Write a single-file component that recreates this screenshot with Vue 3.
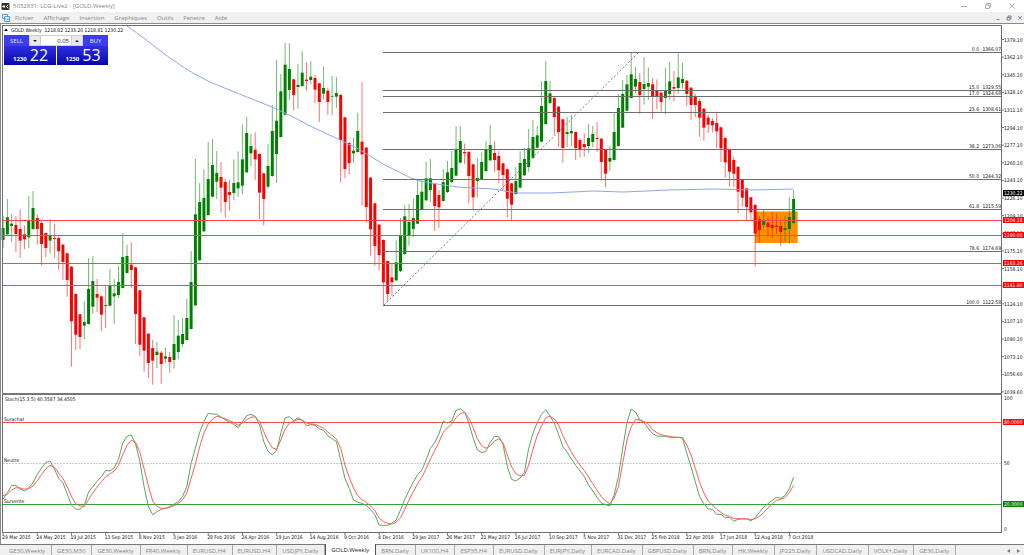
<script setup>
import { ref } from 'vue'

const menus = ['Fichier', 'Affichage', 'Insertion', 'Graphiques', 'Outils', 'Fenetre', 'Aide']
const tabs = [
  'GE30,Weekly', 'GE30,M30', 'GE30,Weekly', 'FR40,Weekly', 'EURUSD,H4', 'EURUSD,H4', 'USDJPY,Daily',
  'GOLD,Weekly', 'BRN,Daily', 'UK100,H4', 'ESP35,H4', 'EURUSD,Daily', 'EURJPY,Daily', 'EURCAD,Daily',
  'GBPUSD,Daily', 'BRN,Daily', 'HK,Weekly', 'JP225,Daily', 'USDCAD,Daily', 'VOLX+,Daily', 'GE30,Daily'
]
const activeTab = ref(7)
const volume = ref('0.05')

const STEP = 4.273
const barX = (i) => 3.1 + STEP * i

// Candles: direction, high, body top, body bottom, low, in thirds of a unit below each block's top.
const blocks = [
  {
    top: 180,
    rows: `g 108 144 180 204|g 57 112 163 165|g 103 131 138 186|r 108 135 162 216|r 88 147 182 234|r 136 163 178 207
|g 48 120 172 204|g 33 84 147 149|r 103 114 147 194|r 123 129 192 256|r 158 159 204 231|g 117 165 182 221
|r 131 174 177 234|r 170 174 214 269|r 192 194 246 300|r 218 220 300 350|r 258 260 424 560|r 340 342 464 510
|r 402 403 471 507|g 363 426 437 479|g 234 327 432 434|g 228 303 380 401|r 297 342 353 396|r 347 349 404 453
|r 316 375 378 444|g 267 318 377 380|g 297 340 349 432|g 258 306 345 354|g 159 231 324 326|g 194 228 279 280
|r 187 254 270 325|r 261 262 402 492|r 330 331 494 528|r 411 412 512 575|r 459 461 549 594|r 480 504 542 614
|g 486 515 525 564|r 513 518 552 611|g 502 529 536 549|r 516 531 546 578|g 405 492 540 566|g 420 467 516 537
|g 414 462 492 501|g 357 414 480 481|g 213 306 447 448`
  },
  {
    top: 30,
    rows: `g 387 553 826 828|g 459 516 691 693|g 418 504 604 606|g 336 447 555 557|g 327 405 500 502|g 363 429 455 507
|r 396 441 473 548|r 447 456 516 563|r 450 486 495 542|g 388 459 489 510|g 364 457 475 500|g 283 388 467 493
|g 261 309 427 429|g 312 348 370 408|r 307 359 388 450|r 370 372 488 567|r 429 430 507 586|g 341 408 470 476
|g 225 303 438 440|g 90 272 372 459|g 132 184 321 323|g 39 104 254 256|g 40 117 180 210|r 147 148 195 242
|g 102 165 171 236|g 64 128 168 170|r 96 149 153 182|g 93 140 150 163|r 135 144 179 219|r 159 160 216 276
|g 110 174 191 208|r 173 182 216 255|g 138 198 200 256|g 141 189 200 234|r 192 195 330 458|r 261 262 417 444
|r 336 339 399 434|g 323 362 370 398|g 248 303 366 368|r 156 335 373 526|r 351 353 531 578`
  },
  {
    top: 110,
    rows: `r 201 203 358 437|r 278 280 408 467|r 342 344 435 482|r 388 390 517 585|r 452 453 552 576|r 459 502 517 558
|g 391 457 511 514|g 324 378 483 486|g 285 319 432 434|g 282 336 376 407|g 266 324 357 382|g 207 255 341 343
|g 207 245 297 299|g 156 205 271 273|g 147 205 240 276|r 220 222 288 363|r 240 255 292 354|g 177 216 273 275
|g 153 187 246 249|g 123 174 216 219|g 49 120 197 200|g 48 93 158 160|r 101 126 130 162|r 123 126 198 280
|r 162 163 262 301|g 144 204 213 262|g 127 156 208 210|g 93 120 183 186|g 45 105 151 153|r 93 129 150 186
|r 123 138 181 219|r 158 160 195 240|r 175 178 266 322|r 219 220 284 332|g 172 213 252 255|g 124 159 233 235
|g 114 147 196 198|g 57 115 171 186`
  },
  {
    top: 40,
    rows: `g 240 291 354 357|g 258 286 323 325|g 123 198 305 307|g 63 123 252 254|g 122 160 189 193|r 171 174 231 283
|r 198 200 276 321|r 236 238 324 368|g 231 276 282 321|g 224 273 280 318|r 275 276 324 360|r 294 300 327 352
|r 280 312 322 350|g 252 294 318 339|g 258 282 306 321|r 246 294 297 336|r 294 296 366 422|r 329 330 401 442
|g 318 354 365 393|g 219 276 360 362|g 162 204 318 320|g 120 162 263 264|g 105 133 212 214|g 39 103 174 176
|g 81 117 140 159|r 99 126 165 222|g 51 132 147 194|g 82 129 140 180|r 114 133 171 237|r 118 152 168 207
|r 150 158 186 215|g 84 150 174 222|g 66 124 162 180|r 93 141 146 184|g 40 112 144 162|g 69 117 129 146`
  },
  {
    top: 70,
    rows: `r 30 32 72 108|r 51 53 105 149|r 72 78 105 141|r 86 93 143 201|r 114 116 173 212|r 133 143 164 189
|r 144 153 166 187|r 125 159 184 234|r 170 172 235 276|r 201 204 277 323|r 237 238 305 350|r 260 270 311 352
|r 288 291 365 430|r 327 328 383 411|r 354 355 411 453|r 381 382 427 450|r 402 405 491 590|r 438 447 480 519
|g 420 453 465 477|r 442 458 471 500|r 426 465 474 504|r 431 467 471 492|r 452 468 486 528|g 438 474 480 515
|g 382 441 477 521|g 360 387 459 461`
  }
]

const candles = blocks
  .flatMap(({ top, rows }) =>
    rows.split('|').map((row) => {
      const [dir, ...v] = row.trim().split(' ')
      const [high, a, b, low] = v.map((n) => top + Number(n) / 3)
      return { dir, high, a, b, low }
    })
  )
  .map((c, i) => ({ ...c, x: barX(i) }))

const path = (values) =>
  values
    .trim()
    .split(/\s+/)
    .map((v, i) => `${barX(i).toFixed(1)},${(390 + v / 3).toFixed(1)}`)
    .join(' ')

const stochK = path(`
327 308 286 286 297 303 293 279 253 234 217 213 237 265 278 312 346 357 358 346 306 290 274 260 241 243 234 208 160 139
135 162 214 290 350 374 365 358 355 350 342 335 319 290 220 175 127 95 70 72 73 81 90 97 103 113 95 77 73 79
105 155 184 194 182 130 84 80 92 83 91 107 104 106 116 121 137 146 155 210 265 295 330 337 340 346 359 374 405 406
406 400 390 360 328 302 276 254 240 210 175 158 132 94 99 93 61 56 66 100 143 180 188 184 157 139 140 163 230 268
273 264 247 175 130 98 73 59 78 100 133 170 187 207 226 243 259 285 303 322 339 344 348 315 260 175 98 57 66 90
98 115 131 138 139 139 142 142 142 145 190 231 275 320 341 357 358 373 373 383 382 394 388 387 387 392 383 367 351 341
331 322 325 316 296 262`)

const stochD = path(`
317 312 300 293 294 298 296 288 272 254 236 226 232 249 265 290 320 341 348 349 328 309 291 275 260 252 243 226 194 166
151 157 186 236 288 333 349 355 355 352 347 340 329 309 265 222 170 130 102 87 79 82 86 92 98 106 99 89 82 80
93 125 153 173 178 150 118 99 94 88 90 99 102 103 109 115 126 136 147 175 225 262 294 317 329 337 348 362 384 395
400 402 397 383 358 330 305 281 262 236 207 182 157 127 113 102 83 71 67 85 112 146 167 175 168 153 147 158 195 231
251 258 256 225 177 137 108 83 79 87 105 137 163 186 207 225 241 261 281 301 320 333 341 324 290 220 150 110 88 90
94 103 119 128 134 137 139 142 142 143 165 195 235 277 309 333 345 358 367 376 379 386 386 386 386 389 386 379 367 354
342 331 328 322 308 286`)

const average =
  '127,26 145,39 163,53 180,65 193,73 210,82 227,89 247,97 257,101 272,107 285,113 297,119 310,126 323,132 340,140 357,148 370,156 383,164 397,171 411,178 420,181 437,184 457,187 493,189 505,191 517,193 533,193 550,193 573,192 593,191 623,192 647,191 667,190 713,189 755,190 793,189'

const fibs = [
  ['0.0', '1366.07', 52], ['15.0', '1329.55', 90], ['17.0', '1324.68', 96], ['23.6', '1308.61', 112],
  ['38.2', '1273.06', 149], ['50.0', '1244.32', 179], ['61.8', '1215.59', 209], ['78.6', '1174.69', 251],
  ['100.0', '1122.58', 305]
]
const levels = [220, 235, 263, 285]
const scale = [
  '1379.10', '1362.10', '1345.10', '1328.10', '1311.10', '1294.10', '1277.10', '1260.10', '1243.10', '1226.10',
  '1209.10', '1192.10', '1175.10', '1158.10', '1141.10', '1124.10', '1107.10', '1090.10', '1073.10', '1056.60', '1039.60'
].map((label, i) => ({ label, y: 39.5 + i * 17.62 }))
const tags = [
  ['1230.22', 193, 'black'], ['1204.18', 220, 'red'], ['1190.00', 235, 'red'], ['1163.26', 263, 'red'],
  ['1141.90', 285, 'red'], ['80.0000', 422, 'red'], ['20.0000', 504, 'green']
]
const dates = [
  '29 Mar 2015', '24 May 2015', '19 Jul 2015', '13 Sep 2015', '8 Nov 2015', '3 Jan 2016', '28 Feb 2016', '24 Apr 2016',
  '19 Jun 2016', '14 Aug 2016', '9 Oct 2016', '4 Dec 2016', '29 Jan 2017', '26 Mar 2017', '21 May 2017', '16 Jul 2017',
  '10 Sep 2017', '5 Nov 2017', '31 Dec 2017', '25 Feb 2018', '22 Apr 2018', '17 Jun 2018', '12 Aug 2018', '7 Oct 2018'
].map((label, i) => ({ label, x: barX(i * 8) }))
</script>

<template>
  <div class="window">
    <header class="titlebar">
      <svg class="logo" viewBox="0 0 8 7">
        <rect width="8" height="7" rx="1" fill="#333" />
        <path d="M1 3.5h2.5M3 2l-1.5 1.5L3 5M6.8 1.8L4.8 3.5l2 1.7" fill="none" stroke="#fff" />
      </svg>
      <span class="title">5032831: LCG-Live2 - [GOLD,Weekly]</span>
      <div class="controls">
        <button aria-label="Minimize"><svg viewBox="0 0 6 6"><path d="M0 3.5h6" /></svg></button>
        <button aria-label="Restore"><svg viewBox="0 0 6 6"><path d="M.5 1.8h3.7v3.7H.5zM1.8 1.5v-1h3.7v3.7h-1" /></svg></button>
        <button aria-label="Close"><svg viewBox="0 0 6 6"><path d="M.5.5l5 5M5.5.5l-5 5" /></svg></button>
      </div>
    </header>

    <nav class="menubar">
      <svg class="docicon" viewBox="0 0 8 8">
        <path d="M.5.5h5v4h-5z" fill="#eef5fd" stroke="#5b9bd8" />
        <path d="M2.5 2.5h5v5h-5z" fill="#fff" stroke="#5b9bd8" />
        <path d="M4 4v2.5M6 3.5v2.5" stroke="#5b9bd8" />
      </svg>
      <button v-for="m in menus" :key="m">{{ m }}</button>
      <div class="controls child">
        <button aria-label="Minimize chart"><svg viewBox="0 0 6 6"><path d="M1.500 4.500h3" /></svg></button>
        <button aria-label="Restore chart"><svg viewBox="0 0 6 6"><path d="M1 2.500h3v2.500H1zM2 2V1h3v2.800h-.6" /></svg></button>
        <button aria-label="Close chart"><svg viewBox="0 0 6 6"><path d="M1.200 1.200l3.500 3.500M4.700 1.200L1.200 4.700" /></svg></button>
      </div>
    </nav>

    <main class="chart">
      <svg class="plot" viewBox="0 23 1024 521">
        <rect x="0" y="23" width="1024" height="521" fill="#fff" />
        <path d="M0 23.5H1024M.5 23V544" stroke="#8a8a8a" />

        <rect x="755" y="211.5" width="42.7" height="31.5" fill="#ff9000" />

        <g class="candles">
          <g v-for="(c, i) in candles" :key="i" :class="c.dir">
            <path :d="`M${c.x} ${c.high}V${c.low}`" class="wick" />
            <path :d="`M${c.x} ${c.a}V${c.b}`" class="body" />
          </g>
        </g>

        <polyline :points="average" class="average" />

        <g class="rules">
          <path v-for="f in fibs" :key="f[0]" :d="`M383 ${f[2] + 0.5}H1001`" class="fib" />
          <path v-for="y in levels" :key="y" :d="`M3 ${y + 0.5}H1002`" class="level" />
          <path d="M384 305L638 53" class="trend" />
        </g>

        <g v-for="f in fibs" :key="f[1]" class="end">
          <text x="979" :y="f[2] - 1">{{ f[0] }}</text>
          <text x="1001" :y="f[2] - 1">{{ f[1] }}</text>
        </g>

        <path d="M3 422.5H1002" class="level" />
        <path d="M3 504.5H1002" class="oversold" />
        <path d="M3 463.5H1002" class="middle" />
        <polyline :points="stochK" class="stoch-k" />
        <polyline :points="stochD" class="stoch-d" />
        <text x="4" y="421">Surachat</text>
        <text x="4" y="462">Neutre</text>
        <text x="4" y="503">Survente</text>
        <text x="5" y="401">Stoch(15,3,5) 40.3587 34.4505</text>

        <path d="M2.5 25V532.5H1001.5V25.5H2.5" class="frame" />
        <path d="M2 394H1002" class="divider" />

        <g v-for="s in scale" :key="s.label">
          <path :d="`M1002 ${s.y}h2`" class="tick" />
          <text x="1004" :y="s.y + 2">{{ s.label }}</text>
        </g>
        <text x="1004" y="400">100</text>
        <text x="1004" y="465">50</text>
        <text x="1004" y="531">0</text>
        <g v-for="t in tags" :key="t[0]" :class="['tag', t[2]]">
          <rect x="1003" :y="t[1] - 3" width="21" height="6" />
          <text x="1004" :y="t[1] + 2">{{ t[0] }}</text>
        </g>

        <g v-for="d in dates" :key="d.label">
          <path :d="`M${d.x} 532v3`" class="tick" />
          <text :x="d.x - 1" y="539">{{ d.label }}</text>
        </g>

        <path d="M4 31h4l-2-2.5z" fill="#000" />
        <text x="11" y="32">GOLD,Weekly&#160; 1218.82 1233.20 1218.81 1230.22</text>
      </svg>

      <section class="trade" aria-label="Trading">
        <div class="top">
          <button class="side">SELL</button>
          <button class="spin" aria-label="Decrease volume"><i class="down"></i></button>
          <input v-model="volume" aria-label="Volume" />
          <button class="spin" aria-label="Increase volume"><i class="up"></i></button>
          <button class="side">BUY</button>
        </div>
        <div class="quotes">
          <button><small>1230</small><b>22</b></button>
          <button><small>1230</small><b>53</b></button>
        </div>
      </section>
    </main>

    <footer class="tabs">
      <button v-for="(t, i) in tabs" :key="i" :class="{ active: i === activeTab }" @click="activeTab = i">{{ t }}</button>
      <div class="arrows">
        <button aria-label="Scroll left"><svg viewBox="0 0 3 4"><path d="M3 0v4L0 2z" /></svg></button>
        <button aria-label="Scroll right"><svg viewBox="0 0 3 4"><path d="M0 0v4l3-2z" /></svg></button>
      </div>
    </footer>
  </div>
</template>

<style>
body {
  margin: 0;
  background: #f0f0f0;
}
</style>

<style scoped>
.window {
  font-family: "Open Sans", "Noto Sans", sans-serif;
  font-size: 6px;
  line-height: 8px;
  color: #858585;
}
button {
  padding: 0;
  border: 0;
  background: none;
  font: inherit;
  color: inherit;
  white-space: nowrap;
}
svg {
  display: block;
}
.titlebar {
  display: flex;
  align-items: center;
  gap: 3px;
  height: 12px;
  padding-left: 1px;
  background: #fff;
}
.logo {
  width: 9px;
  height: 7px;
}
.controls {
  display: flex;
  gap: 18px;
  margin-left: auto;
  padding-right: 9px;
}
.controls svg {
  width: 6px;
  height: 6px;
  fill: none;
  stroke: #999;
  stroke-width: 0.8;
}
.menubar {
  display: flex;
  align-items: center;
  gap: 10px;
  height: 11px;
  padding-left: 2px;
  background: #f0f0f0;
}
.docicon {
  width: 8px;
  height: 8px;
  margin-right: -5px;
}
.controls.child {
  gap: 5px;
  padding-right: 1px;
}
.controls.child svg {
  stroke: #667;
}
.chart {
  position: relative;
}
.plot {
  width: 100%;
  height: auto;
}
.plot text {
  font-family: "DejaVu Sans Condensed", "DejaVu Sans", sans-serif;
  font-size: 5px;
  fill: #111;
}
.end text {
  text-anchor: end;
}
.wick {
  stroke-width: 1;
  opacity: 0.55;
}
.body {
  stroke-width: 3;
}
.g path {
  stroke: #008000;
}
.r path {
  stroke: #f00;
}
.average,
.stoch-k,
.stoch-d {
  fill: none;
  stroke: #8fa8ee;
}
.stoch-k {
  stroke: #58a858;
}
.stoch-d {
  stroke: #ff5c5c;
}
.fib {
  stroke: #6e6e6e;
}
.level {
  stroke: #ff4646;
}
.oversold {
  stroke: #3c9e3c;
}
.middle {
  stroke: #ccc;
  stroke-dasharray: 2 1;
}
.trend {
  stroke: #777;
  stroke-dasharray: 2 2;
}
.frame {
  fill: none;
  stroke: #6e6e6e;
}
.divider {
  stroke: #777;
  stroke-width: 2;
}
.tick {
  stroke: #777;
}
.tag.black rect {
  fill: #000;
}
.tag.red rect {
  fill: #f00;
}
.tag.green rect {
  fill: #008000;
}
.plot .tag text {
  fill: #fff;
}
.trade {
  position: absolute;
  left: 4px;
  top: 12px;
  width: 104px;
  color: #fff;
}
.top {
  display: flex;
  height: 11px;
}
.side {
  width: 25px;
  background: #3c3cf0;
  color: #e8eaff;
}
.spin {
  display: grid;
  place-items: center;
  width: 12px;
  background: #e9e9e9;
  border: 1px solid #d0d0d0;
}
.spin i {
  border: 2px solid transparent;
}
.spin .down {
  border-top-color: #222;
  border-bottom: 0;
}
.spin .up {
  border-bottom-color: #222;
  border-top: 0;
}
input {
  flex: 1;
  min-width: 0;
  box-sizing: border-box;
  padding: 0 2px 0 0;
  border: 1px solid #d0d0d0;
  border-width: 1px 0;
  background: #fff;
  font: inherit;
  color: #222;
  text-align: right;
}
.quotes {
  display: grid;
  grid-template-columns: 1fr 1fr;
  gap: 1px;
}
.quotes button {
  display: flex;
  align-items: flex-end;
  gap: 3px;
  height: 19px;
  padding-left: 9px;
  background: linear-gradient(#2f2fe0, #0606b0);
}
.quotes small {
  font-size: 6px;
  line-height: 11px;
  font-weight: 700;
}
.quotes b {
  font-size: 16px;
  line-height: 19px;
  font-weight: 400;
}
.tabs {
  display: flex;
  align-items: stretch;
  height: 11px;
  border-top: 1px solid #777;
  background: #f0f0f0;
  padding-left: 4px;
}
.tabs > button {
  padding: 0 6px 0 5px;
  border-right: 1px solid #aaa;
}
.tabs > .active {
  margin-top: -1px;
  background: #fff;
  color: #222;
  border-left: 1px solid #555;
  border-right-color: #555;
}
.arrows {
  display: flex;
  gap: 7px;
  margin-left: auto;
  padding-right: 4px;
}
.arrows svg {
  width: 3px;
  height: 4px;
  fill: #777;
}
</style>
